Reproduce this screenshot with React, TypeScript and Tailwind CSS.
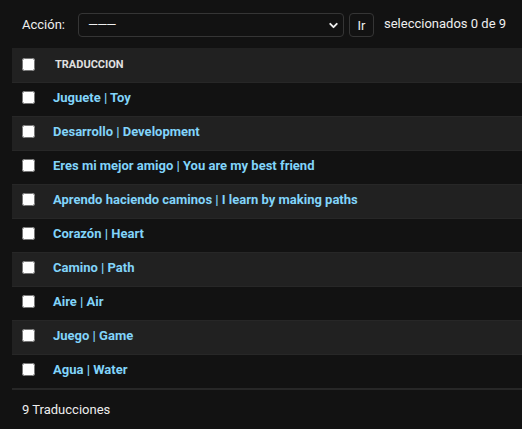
import { ChevronDown } from 'lucide-react'

const rows = [
  'Juguete | Toy',
  'Desarrollo | Development',
  'Eres mi mejor amigo | You are my best friend',
  'Aprendo haciendo caminos | I learn by making paths',
  'Corazón | Heart',
  'Camino | Path',
  'Aire | Air',
  'Juego | Game',
  'Agua | Water',
]

export default function App() {
  return (
    <div className="min-h-[429px] w-full bg-[#121212] pl-[12px] text-[13px] text-[#eeeeee] font-['Roboto',sans-serif]">
      {/* Actions bar */}
      <div className="flex items-center h-[48px] pl-[10px] pt-[2px]">
        <label className="mr-[13px]">Acción:</label>
        <div className="relative flex items-center w-[266px] h-[24px] border border-[#353535] rounded-[4px] pl-[9px]">
          <span className="tracking-[-1px] text-[#eeeeee]">———</span>
          <ChevronDown className="absolute right-[3px] top-[5px] w-[13px] h-[13px]" strokeWidth={3.5} />
        </div>
        <button className="ml-[5px] w-[25px] h-[24px] border border-[#353535] rounded-[4px] text-[13px] text-[#eeeeee] pt-[1px]">
          Ir
        </button>
        <span className="ml-[10px] mb-[2px]">seleccionados 0 de 9</span>
      </div>

      {/* Results table */}
      <div className="w-full">
        <div className="flex items-center h-[34px] bg-[#212121] pl-[10px]">
          <input type="checkbox" className="w-[13px] h-[13px] m-0 mb-[2px]" />
          <span className="ml-[20px] mt-[1px] text-[11px] font-bold uppercase text-[#e0e0e0]">Traduccion</span>
        </div>
        {rows.map((r, i) => (
          <div
            key={r}
            className={`flex items-center h-[34px] border-t border-[#272727] pl-[10px] pb-[4px] ${
              i % 2 === 1 ? 'bg-[#212121]' : 'bg-[#121212]'
            }`}
          >
            <input type="checkbox" className="w-[13px] h-[13px] m-0" />
            <a className="ml-[18px] font-bold text-[#81d4fa]">{r}</a>
          </div>
        ))}
        <div className="border-t-2 border-[#272727] h-[40px] flex items-center pl-[10px] pt-[1px]">
          9 Traducciones
        </div>
      </div>
    </div>
  )
}
